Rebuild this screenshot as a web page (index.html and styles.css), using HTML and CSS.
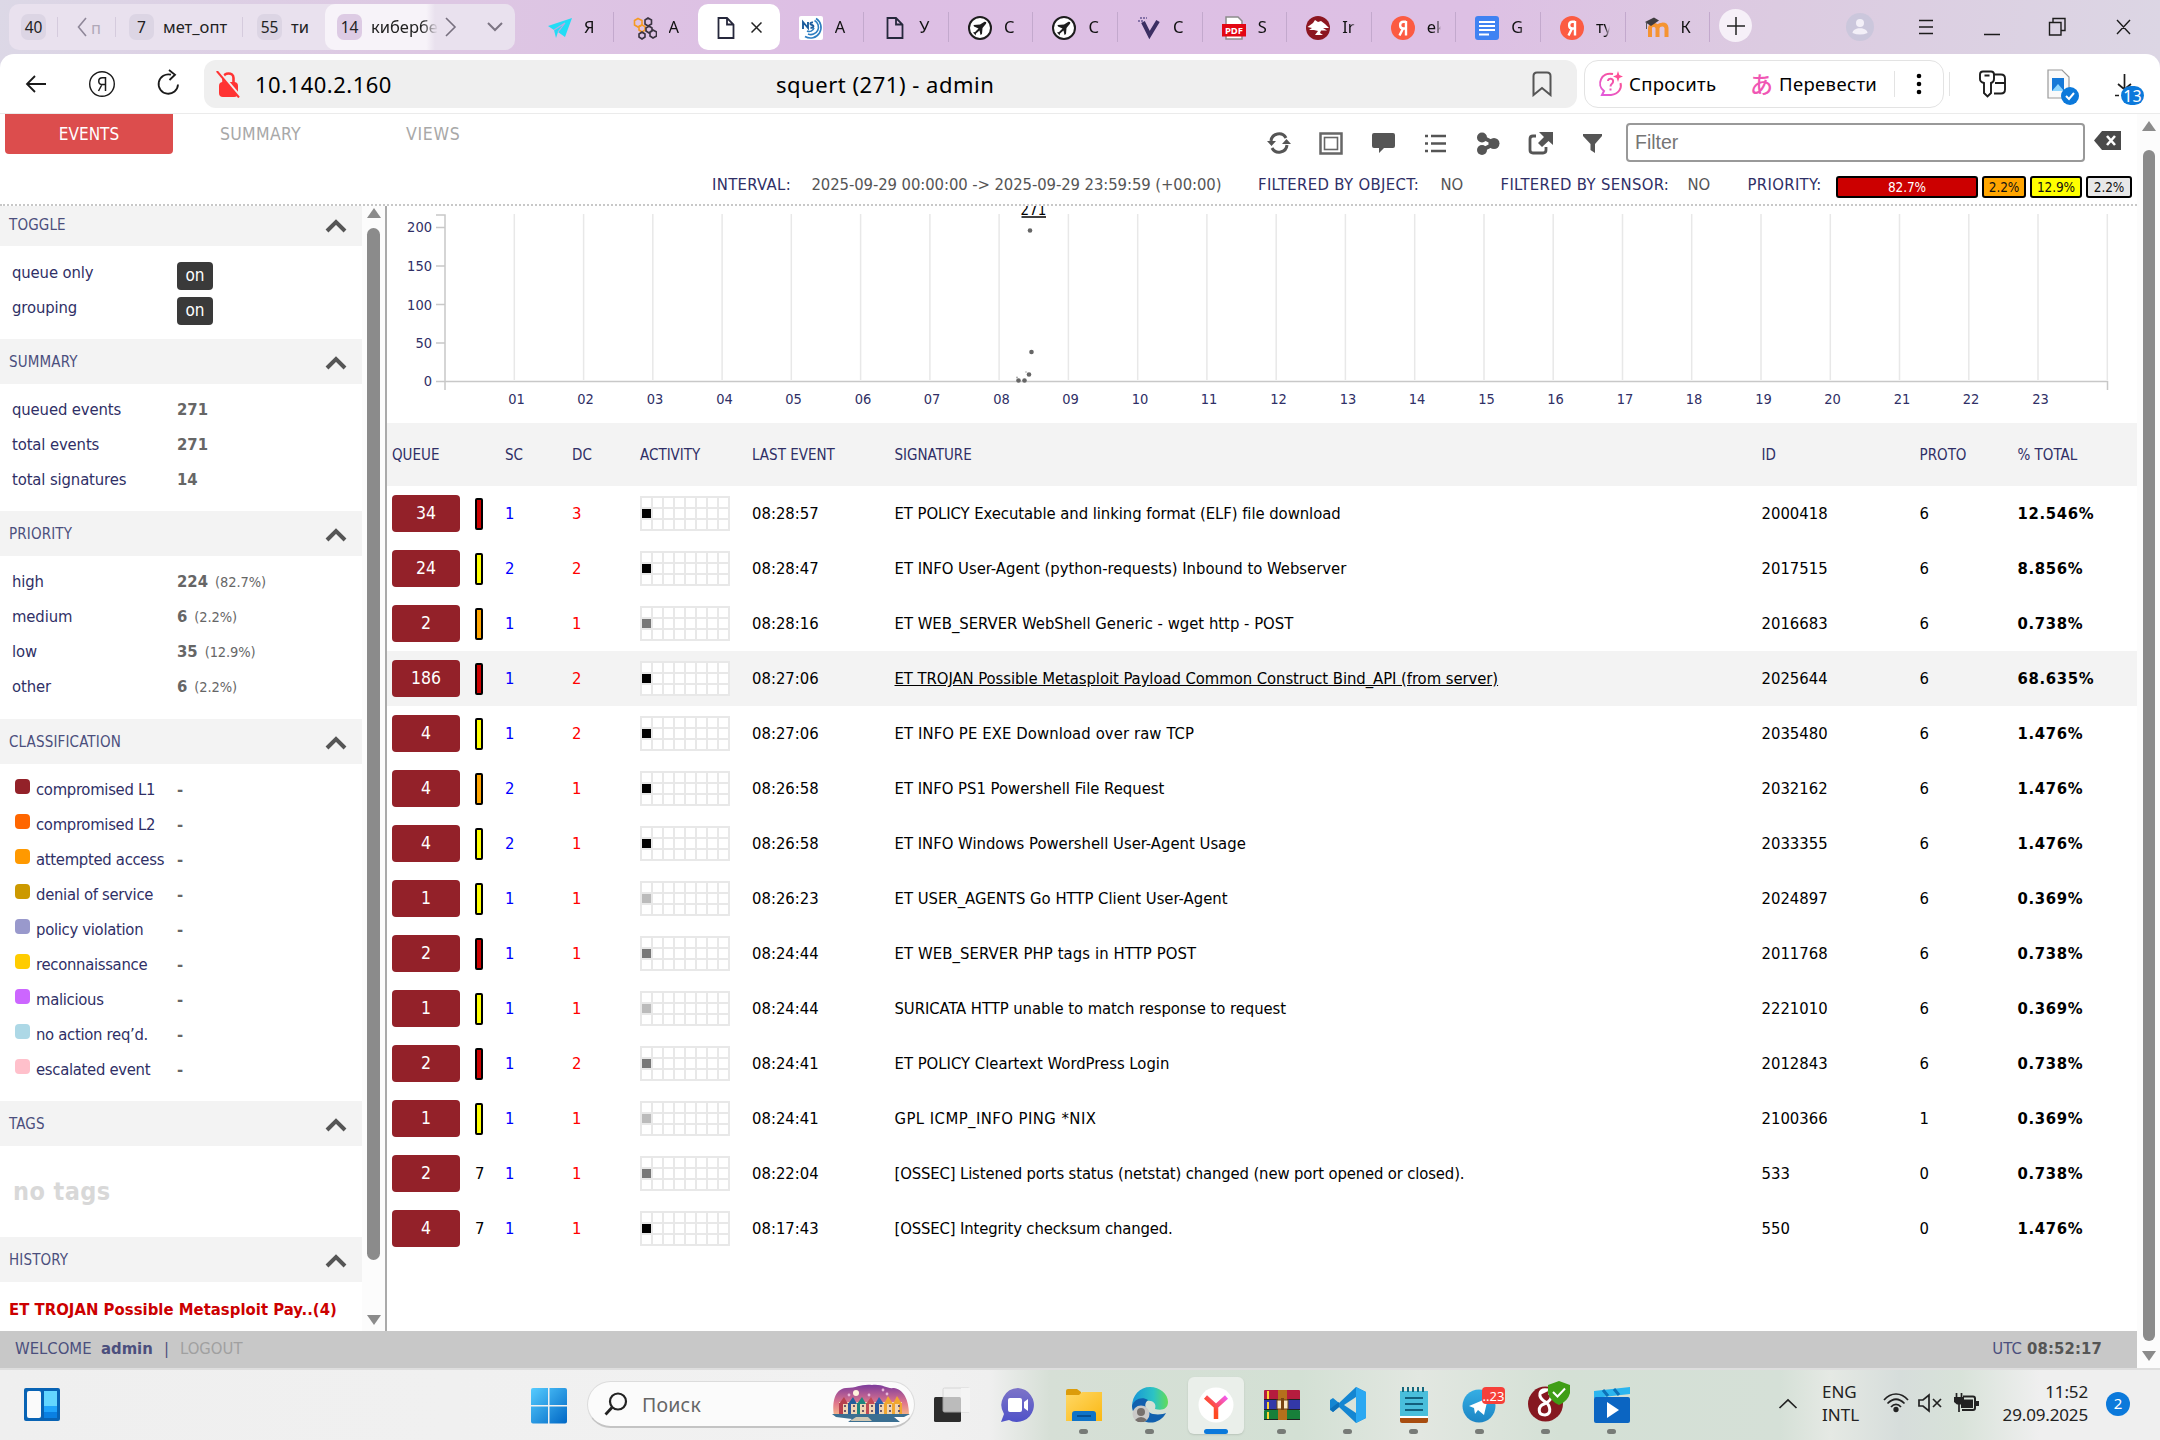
FILE: index.html
```html
<!DOCTYPE html>
<html lang="ru">
<head>
<meta charset="utf-8">
<title>squert (271) - admin</title>
<link rel="stylesheet" href="styles.css">
</head>
<body>
<svg class="defs" width="0" height="0" aria-hidden="true">
  <defs>
    <symbol id="doc" viewBox="0 0 24 24"><path d="M4.500 2H13L19.500 8.500V22H4.500ZM13 2V8.500H19.500" fill="none" stroke="#26283c" stroke-width="1.800"/></symbol>
    <symbol id="plane" viewBox="0 0 24 24"><circle cx="12" cy="12" r="11" fill="#fff" stroke="#1d1d1d" stroke-width="2"/><path d="M5.500 9L12 8.500L16.500 5.800Q19 5.500 18 7.800L14.500 12L14 18L12.500 19L11.500 14.500L8 17.500L7.500 19.500L6.500 18L5 16.500L7 16L10.500 12.500L6 10.500Z" fill="#1d1d1d"/></symbol>
    <symbol id="ya" viewBox="0 0 24 24"><circle cx="12" cy="12" r="12" fill="#fc5b42"/><path d="M15 5V19.500M15 5.800H12.500C8 5.800 8 12.500 12.500 12.500H15M12 12.500L8.500 19.500" fill="none" stroke="#fff" stroke-width="2.400"/></symbol>
    <symbol id="chev" viewBox="0 0 22 14"><path d="M2 12L11 3L20 12" fill="none" stroke="#555" stroke-width="4"/></symbol>
    <linearGradient id="pink" x1="0" y1="1" x2="1" y2="0"><stop offset="0" stop-color="#e05be0"/><stop offset="1" stop-color="#ff4f86"/></linearGradient>
    <linearGradient id="win" x1="0" y1="0" x2="1" y2="1"><stop offset="0" stop-color="#56ccff"/><stop offset="1" stop-color="#0067c5"/></linearGradient>
    <linearGradient id="meet" x1="0" y1="0" x2="0" y2="1"><stop offset="0" stop-color="#7d74c8"/><stop offset="1" stop-color="#4f52c8"/></linearGradient>
    <linearGradient id="fold" x1="0" y1="0" x2="1" y2="1"><stop offset="0" stop-color="#ffd866"/><stop offset="1" stop-color="#fbb813"/></linearGradient>
    <linearGradient id="edge" x1="0" y1="0" x2="1" y2="0"><stop offset="0" stop-color="#1795d8"/><stop offset=".6" stop-color="#2cc3c4"/><stop offset="1" stop-color="#62dc58"/></linearGradient>
    <linearGradient id="yy" x1="0" y1="1" x2="1" y2="0"><stop offset=".4" stop-color="#ff4a22"/><stop offset="1" stop-color="#f25bf2"/></linearGradient>
    <linearGradient id="sky" x1="0" y1="0" x2="0" y2="1"><stop offset="0" stop-color="#7d3c9c"/><stop offset=".6" stop-color="#e0768c"/><stop offset="1" stop-color="#f5b489"/></linearGradient>
    <linearGradient id="tg" x1="0" y1="0" x2="0" y2="1"><stop offset="0" stop-color="#35aee4"/><stop offset="1" stop-color="#1c85c4"/></linearGradient>
  </defs>
</svg>

<div class="tabstrip">
  <div class="groups">
    <span class="badge hex">40</span><i class="gsep s1"></i>
    <svg class="gl" width="10" height="20" viewBox="0 0 10 20"><path d="M9 1L1.500 10L9 19" fill="none" stroke="#8f8799" stroke-width="1.600"/></svg>
    <span class="gfade">п</span><i class="gsep s2"></i>
    <span class="badge">7</span><span class="gname n1">мет_опт</span><i class="gsep s3"></i>
    <span class="badge">55</span><span class="gname n2">ти</span>
    <span class="gactive"><span class="badge dark">14</span><span class="gname n3">кибербе</span></span>
    <svg class="gr" width="12" height="20" viewBox="0 0 12 20"><path d="M1 1L10 10L1 19" fill="none" stroke="#77707f" stroke-width="1.600"/></svg>
    <svg class="gd" width="16" height="10" viewBox="0 0 16 10"><path d="M1 1L8 8L15 1" fill="none" stroke="#7c7583" stroke-width="2"/></svg>
  </div>
  <div class="tabs">
    <div class="tab"><svg width="24" height="24" viewBox="0 0 24 24"><path d="M0 10L24 2L17 21L10 16L8 22L6 14Z" fill="#22dcf5"/><path d="M6 14L17 7L10 16" fill="none" stroke="#b8a9e0" stroke-width="1.200"/></svg><b>Я</b></div>
    <div class="tab nosep"><svg width="24" height="24" viewBox="0 0 24 24" fill="none" stroke-width="1.600"><path d="M5 2.500L9 4.500V9L5 11L1.500 9V4.500Z" stroke="#f59a23"/><path d="M9 9L12 10.500V14L9 16L6 14V10.500Z" stroke="#f59a23"/><path d="M15 2L18.500 4V8L15 10L12 8V4ZM16 10L19 12V15L16 17L13 15V12ZM9 16L12 18V21L9 23L6 21V18ZM20 14L23.500 16V20L20 22L17 20V16Z" stroke="#3a3340"/></svg><b>А</b></div>
    <div class="tab active"><svg width="24" height="24"><use href="#doc"/></svg><svg class="tx" width="11" height="11" viewBox="0 0 11 11"><path d="M.5.5L10.500 10.500M10.500.5L.5 10.500" stroke="#222" stroke-width="1.500"/></svg></div>
    <div class="tab"><svg width="24" height="24" viewBox="0 0 24 24"><rect width="24" height="24" rx="2" fill="#fff"/><path d="M4 13V6L9 12V6M14 6.500C11 6 10.500 8.500 13 9C15.500 9.500 14.500 12.500 11.500 11.500" fill="none" stroke="#1c5c9c" stroke-width="1.900"/><path d="M15.500 4.500A7.500 7.500 0 0 1 9 18M17 2.500A10 10 0 0 1 6 20.500M15 12A5 5 0 0 1 8 15" fill="none" stroke="#2d7ec0" stroke-width="1.600"/></svg><b>А</b></div>
    <div class="tab"><svg width="24" height="24"><use href="#doc"/></svg><b>У</b></div>
    <div class="tab"><svg width="24" height="24"><use href="#plane"/></svg><b>С</b></div>
    <div class="tab"><svg width="24" height="24"><use href="#plane"/></svg><b>С</b></div>
    <div class="tab"><svg width="24" height="24" viewBox="0 0 24 24"><path d="M6 6L12.500 19L21 5" fill="none" stroke="#3c2f63" stroke-width="4"/><path d="M1 5H6M3 2H10" stroke="#6a5a94" stroke-width="1.500" stroke-dasharray="2 1"/></svg><b>С</b></div>
    <div class="tab"><svg width="24" height="24" viewBox="0 0 24 24"><path d="M4 1H16L20 5V23H4Z" fill="#fff" stroke="#8c8c8c" stroke-width="1.500"/><rect y="8" width="24" height="12.500" fill="#e30613"/><text x="12" y="18" text-anchor="middle" class="pdf">PDF</text></svg><b>S</b></div>
    <div class="tab"><svg width="24" height="24" viewBox="0 0 24 24"><circle cx="12" cy="12" r="12" fill="#8c1620"/><path d="M1.500 11L7 7L9 4L12 6L15 5L19 8L23 12L17 12L21 14.500L15 14.500L14 17L17 19H9L12 15L8 14L3 14L6 12Z" fill="#fff"/></svg><b>Ir</b></div>
    <div class="tab"><svg width="24" height="24"><use href="#ya"/></svg><b>ek</b></div>
    <div class="tab"><svg width="24" height="24" viewBox="0 0 24 24"><rect width="24" height="24" rx="3" fill="#3f82f2"/><path d="M4 6H20M4 10H20M4 14H20M4 18.500H14" stroke="#fff" stroke-width="2.200"/></svg><b>G</b></div>
    <div class="tab"><svg width="24" height="24"><use href="#ya"/></svg><b>ту</b></div>
    <div class="tab"><svg width="24" height="24" viewBox="0 0 24 24"><path d="M5 21V12C5 8 12 8 12.500 12V21M12.500 12C13 8 21 7 21.500 12V21" fill="none" stroke="#f59432" stroke-width="4"/><path d="M0 6L9 1.500L14 4.500L6 10Z" fill="#3f3c40"/><path d="M1.500 6V13" stroke="#555"/></svg><b>К</b></div>
  </div>
  <div class="plus"><svg width="18" height="18" viewBox="0 0 18 18"><path d="M9 0V18M0 9H18" stroke="#222" stroke-width="1.500"/></svg></div>
  <svg class="ava" width="28" height="28" viewBox="0 0 28 28"><circle cx="14" cy="14" r="14" fill="#cbc7dc"/><circle cx="14" cy="10" r="4" fill="#f3f0f8"/><path d="M6.500 20C6.500 13.500 21.500 13.500 21.500 20Q14 23 6.500 20Z" fill="#f3f0f8"/></svg>
  <svg class="wc" width="220" height="20" viewBox="0 0 220 20" fill="none" stroke="#1c1c1c" stroke-width="1.400"><path d="M1 4.500H15M1 11H15M1 17.500H15M66 18.500H82M135 6.500V2.500H147V14.500H143M131.500 6.500H143V19H131.500ZM199 4L212 18M212 4L199 18"/></svg>
</div>

<div class="toolbar">
  <svg class="navs" width="160" height="30" viewBox="0 0 160 30" fill="none" stroke="#1a1a1a" stroke-width="1.800"><path d="M10 7L2 15L10 23M2 15H21"/><circle cx="77" cy="15" r="12.300" stroke-width="1.400"/><path d="M80.500 8V22M80.500 8.800H77.500C72.500 8.800 72.500 15.500 77.500 15.500H80.500M77 15.500L73.500 22" stroke-width="1.500"/><path d="M153 15.500A9.700 9.700 0 1 1 146 5.700M144 1L150 5.700L144.500 11"/></svg>
  <div class="address">
    <svg width="25" height="27" viewBox="0 0 25 27"><path d="M7.500 12V7C7.500 1 17.500 1 17.500 7V12" fill="none" stroke="#ff3333" stroke-width="2.600"/><rect x="3" y="11" width="19" height="15" rx="4" fill="#ff3333"/><path d="M2.500 0L24.500 26" stroke="#efefef" stroke-width="3"/><path d="M.8 0L23 26.500" stroke="#ff3333" stroke-width="2"/></svg>
    <span class="ip">10.140.2.160</span><span class="ptitle">squert (271) - admin</span>
    <svg class="bm" width="20" height="26" viewBox="0 0 20 26"><path d="M1.500 24V5Q1.500 1.500 5 1.500H15Q18.500 1.500 18.500 5V24L10 17Z" fill="none" stroke="#555" stroke-width="2"/></svg>
  </div>
  <div class="pill">
    <svg class="ask" width="26" height="26" viewBox="0 0 26 26" fill="none" stroke="url(#pink)" stroke-width="2"><path d="M15 3C3 .5-2 14 6 20L4 24H13C21 23 24 17 22.500 12M10 10C10 6.500 16 7 15 11C14.500 13 12.500 13 12.500 15.500M12.500 17.500V19.500"/><path d="M20 0L21.300 4L25 5.500L21.300 7L20 11L18.700 7L15 5.500L18.700 4Z" fill="#ff4f96" stroke="none"/></svg>
    <span class="pt a">Спросить</span><span class="kana">あ</span><span class="pt b">Перевести</span><i class="psep"></i>
    <svg width="6" height="24" viewBox="0 0 6 24"><circle cx="3" cy="4" r="2.300"/><circle cx="3" cy="12" r="2.300"/><circle cx="3" cy="20" r="2.300"/></svg>
  </div>
  <i class="tsep"></i>
  <svg class="ticons" width="175" height="48" viewBox="0 0 175 48" fill="none" stroke="#1d1d1d" stroke-width="2"><path d="M14 11.500H22Q25 11.500 25 14.500V19Q25 22 22 23V33L18.500 36.500L15 33V23Q11 22 11 19V14.500Q11 11.500 14 11.500ZM15.500 15.500H20.500" stroke-width="1.900"/><path d="M25 14.500H32Q36 14.500 36 18.500V29.500Q36 33.500 32 33.500H25M26 23H36" stroke-width="1.900"/><path d="M79 10H93L100 17V38H79Z" fill="#fafafa" stroke="#9a9a9a" stroke-width="1.200"/><path d="M83 18H95V31H83Z" fill="#1679d8" stroke="none"/><path d="M83 31L89 24L95 31Z" fill="#8ed6ff" stroke="none"/><circle cx="101" cy="36" r="9" fill="#0b79db" stroke="none"/><path d="M97 36L100 39L105 33" stroke="#fff"/><path d="M155.500 14V29M149 24L155 29M146 35.500H150M162 24L157 28" stroke-width="1.700"/><rect x="152" y="26" width="23" height="19" rx="9.500" fill="#0b79db" stroke="none"/><text x="163.500" y="41.500" text-anchor="middle" class="b13">13</text></svg>
</div>

<div class="page">
  <div class="app">
    <div class="head">
      <nav><a class="on"><span class="x1">EVENTS</span></a><a class="t2">SUMMARY</a><a class="t3">VIEWS</a></nav>
      <div class="tools">
        <svg class="ti" width="340" height="30" viewBox="0 0 340 30"><g fill="none" stroke="#555" stroke-width="3"><path d="M4 13A8 8 0 0 1 19 10M20 17A8 8 0 0 1 5 20"/></g><path d="M0 13H9L4.500 18ZM15 16H24L19.500 11Z" fill="#555"/><g fill="none" stroke="#666"><rect x="53.500" y="5.500" width="21" height="20" stroke-width="2.500"/><rect x="57.500" y="9.500" width="13" height="12" stroke-width="1.600"/></g><path d="M107 5H126Q128 5 128 7V18Q128 20 126 20H117L112 25V20H107Q105 20 105 18V7Q105 5 107 5Z" fill="#555"/><path d="M164 8H179M164 15.500H179M164 23H179" stroke="#555" stroke-width="2.600"/><path d="M158 8H161M158 15.500H161M158 23H161" stroke="#555" stroke-width="2.600"/><path d="M215 9L228 15.500L215 22" stroke="#555" stroke-width="4" fill="none"/><g fill="#555"><circle cx="215" cy="9.500" r="5"/><circle cx="215" cy="22" r="5"/><circle cx="227" cy="15.500" r="5.500"/></g><path d="M269 8H266Q263 8 263 11V22Q263 25 266 25H276Q279 25 279 22V19" fill="none" stroke="#555" stroke-width="2.800"/><path d="M272 4H286V17L281.500 13L275 19L271 15L277 9Z" fill="#555"/><path d="M316 6H335V8L328 16V25L323.500 22V16L316 8Z" fill="#555"/></svg>
        <div class="filter">Filter</div>
        <svg width="28" height="20" viewBox="0 0 28 20"><path d="M8 0H27V19H8L0 9.500Z" fill="#4a4a4a"/><path d="M13 5L21 14M21 5L13 14" stroke="#fff" stroke-width="2.600"/></svg>
      </div>
      <div class="status"><span class="l i">INTERVAL:</span><span class="v d">2025-09-29 00:00:00 -&gt; 2025-09-29 23:59:59 (+00:00)</span><span class="l o">FILTERED BY OBJECT:</span><span class="v n">NO</span><span class="l s">FILTERED BY SENSOR:</span><span class="v n">NO</span><span class="l p">PRIORITY:</span>
        <span class="bars"><i class="red">82.7%</i><i class="org">2.2%</i><i class="yel">12.9%</i><i class="gry">2.2%</i></span></div>
    </div>
    <div class="body">
      <aside>
        <h3 class="first">TOGGLE<svg width="22" height="14"><use href="#chev"/></svg></h3>
        <div class="sec tog"><p><span>queue only</span><em>on</em></p><p><span>grouping</span><em>on</em></p></div>
        <h3>SUMMARY<svg width="22" height="14"><use href="#chev"/></svg></h3>
        <div class="sec sum"><p><span>queued events</span><b>271</b></p><p><span>total events</span><b>271</b></p><p><span>total signatures</span><b>14</b></p></div>
        <h3>PRIORITY<svg width="22" height="14"><use href="#chev"/></svg></h3>
        <div class="sec pri"><p><span>high</span><b>224</b><small>(82.7%)</small></p><p><span>medium</span><b>6</b><small>(2.2%)</small></p><p><span>low</span><b>35</b><small>(12.9%)</small></p><p><span>other</span><b>6</b><small>(2.2%)</small></p></div>
        <h3>CLASSIFICATION<svg width="22" height="14"><use href="#chev"/></svg></h3>
        <div class="sec cls">
          <p><i class="c1"></i><span>compromised L1</span><b>-</b></p><p><i class="c2"></i><span>compromised L2</span><b>-</b></p><p><i class="c3"></i><span>attempted access</span><b>-</b></p><p><i class="c4"></i><span>denial of service</span><b>-</b></p><p><i class="c5"></i><span>policy violation</span><b>-</b></p><p><i class="c6"></i><span>reconnaissance</span><b>-</b></p><p><i class="c7"></i><span>malicious</span><b>-</b></p><p><i class="c8"></i><span>no action req’d.</span><b>-</b></p><p><i class="c9"></i><span>escalated event</span><b>-</b></p>
        </div>
        <h3>TAGS<svg width="22" height="14"><use href="#chev"/></svg></h3>
        <div class="notags">no tags</div>
        <h3>HISTORY<svg width="22" height="14"><use href="#chev"/></svg></h3>
        <div class="hist">ET TROJAN Possible Metasploit Pay..(4)</div>
      </aside>
      <div class="sbar side"><i class="up"></i><i class="thumb"></i><i class="down"></i></div>
      <main>
        <svg class="chart" width="1750" height="217" viewBox="387 206 1750 217">
          <path d="M514.300 214V380M583.600 214V380M652.800 214V380M722.100 214V380M791.300 214V380M860.600 214V380M929.900 214V380M999.100 214V380M1068.400 214V380M1137.700 214V380M1206.900 214V380M1276.200 214V380M1345.400 214V380M1414.700 214V380M1484 214V380M1553.200 214V380M1622.500 214V380M1691.700 214V380M1761 214V380M1830.300 214V380M1899.500 214V380M1968.800 214V380M2038 214V380M2107.300 214V380" stroke="#e8e8e8" stroke-width="1.500"/>
          <path d="M436 215H445V390M436 227.500H445M436 266H445M436 304.500H445M436 343H445M436 381.500H2107.500V390" fill="none" stroke="#c8c8c8" stroke-width="1.500"/>
          <g class="ax" text-anchor="end"><text x="432" y="232">200</text><text x="432" y="271">150</text><text x="432" y="309.500">100</text><text x="432" y="348">50</text><text x="432" y="386">0</text></g>
          <g class="ax" text-anchor="middle"><text x="516.500" y="404">01</text><text x="585.500" y="404">02</text><text x="655" y="404">03</text><text x="724.500" y="404">04</text><text x="793.500" y="404">05</text><text x="863" y="404">06</text><text x="932" y="404">07</text><text x="1001.500" y="404">08</text><text x="1070.500" y="404">09</text><text x="1140" y="404">10</text><text x="1209" y="404">11</text><text x="1278.500" y="404">12</text><text x="1348" y="404">13</text><text x="1417" y="404">14</text><text x="1486.500" y="404">15</text><text x="1555.500" y="404">16</text><text x="1625" y="404">17</text><text x="1694" y="404">18</text><text x="1763.500" y="404">19</text><text x="1832.500" y="404">20</text><text x="1902" y="404">21</text><text x="1971" y="404">22</text><text x="2040.500" y="404">23</text></g>
          <text class="pk" x="1033.500" y="215" text-anchor="middle">271</text><path d="M1021.500 217H1046" stroke="#000" stroke-width="1.500"/>
          <g fill="#666"><circle cx="1030" cy="230.500" r="2.300"/><circle cx="1031.500" cy="352" r="2.300"/><circle cx="1029" cy="374.500" r="2.300"/><circle cx="1018.500" cy="380.500" r="2.300"/><circle cx="1024.500" cy="380.500" r="2.300"/><circle cx="1017" cy="377.500" r="1" fill="#aaa"/><circle cx="1026" cy="372" r="1" fill="#ccc"/></g>
        </svg>
        <div class="row th"><span>QUEUE</span><span></span><span>SC</span><span>DC</span><span>ACTIVITY</span><span>LAST EVENT</span><span>SIGNATURE</span><span>ID</span><span>PROTO</span><span>% TOTAL</span></div>
        <div class="row"><b class="q">34</b><i class="pr red"></i><span class="sc">1</span><span class="dc">3</span><span class="act"><i class="k4"></i></span><span>08:28:57</span><span class="sg snug">ET POLICY Executable and linking format (ELF) file download</span><span>2000418</span><span>6</span><b class="pc">12.546%</b></div>
        <div class="row"><b class="q">24</b><i class="pr yel"></i><span class="sc">2</span><span class="dc">2</span><span class="act"><i class="k4"></i></span><span>08:28:47</span><span class="sg">ET INFO User-Agent (python-requests) Inbound to Webserver</span><span>2017515</span><span>6</span><b class="pc">8.856%</b></div>
        <div class="row"><b class="q">2</b><i class="pr org"></i><span class="sc">1</span><span class="dc">1</span><span class="act"><i class="k2"></i></span><span>08:28:16</span><span class="sg">ET WEB_SERVER WebShell Generic - wget http - POST</span><span>2016683</span><span>6</span><b class="pc">0.738%</b></div>
        <div class="row hl"><b class="q">186</b><i class="pr red"></i><span class="sc">1</span><span class="dc">2</span><span class="act"><i class="k4"></i></span><span>08:27:06</span><span class="sg snug">ET TROJAN Possible Metasploit Payload Common Construct Bind_API (from server)</span><span>2025644</span><span>6</span><b class="pc">68.635%</b></div>
        <div class="row"><b class="q">4</b><i class="pr yel"></i><span class="sc">1</span><span class="dc">2</span><span class="act"><i class="k4"></i></span><span>08:27:06</span><span class="sg loose">ET INFO PE EXE Download over raw TCP</span><span>2035480</span><span>6</span><b class="pc">1.476%</b></div>
        <div class="row"><b class="q">4</b><i class="pr org"></i><span class="sc">2</span><span class="dc">1</span><span class="act"><i class="k4"></i></span><span>08:26:58</span><span class="sg">ET INFO PS1 Powershell File Request</span><span>2032162</span><span>6</span><b class="pc">1.476%</b></div>
        <div class="row"><b class="q">4</b><i class="pr yel"></i><span class="sc">2</span><span class="dc">1</span><span class="act"><i class="k4"></i></span><span>08:26:58</span><span class="sg">ET INFO Windows Powershell User-Agent Usage</span><span>2033355</span><span>6</span><b class="pc">1.476%</b></div>
        <div class="row"><b class="q">1</b><i class="pr yel"></i><span class="sc">1</span><span class="dc">1</span><span class="act"><i class="k1"></i></span><span>08:26:23</span><span class="sg">ET USER_AGENTS Go HTTP Client User-Agent</span><span>2024897</span><span>6</span><b class="pc">0.369%</b></div>
        <div class="row"><b class="q">2</b><i class="pr red"></i><span class="sc">1</span><span class="dc">1</span><span class="act"><i class="k2"></i></span><span>08:24:44</span><span class="sg loose">ET WEB_SERVER PHP tags in HTTP POST</span><span>2011768</span><span>6</span><b class="pc">0.738%</b></div>
        <div class="row"><b class="q">1</b><i class="pr yel"></i><span class="sc">1</span><span class="dc">1</span><span class="act"><i class="k1"></i></span><span>08:24:44</span><span class="sg snug">SURICATA HTTP unable to match response to request</span><span>2221010</span><span>6</span><b class="pc">0.369%</b></div>
        <div class="row"><b class="q">2</b><i class="pr red"></i><span class="sc">1</span><span class="dc">2</span><span class="act"><i class="k2"></i></span><span>08:24:41</span><span class="sg">ET POLICY Cleartext WordPress Login</span><span>2012843</span><span>6</span><b class="pc">0.738%</b></div>
        <div class="row"><b class="q">1</b><i class="pr yel"></i><span class="sc">1</span><span class="dc">1</span><span class="act"><i class="k1"></i></span><span>08:24:41</span><span class="sg wide">GPL ICMP_INFO PING *NIX</span><span>2100366</span><span>1</span><b class="pc">0.369%</b></div>
        <div class="row"><b class="q">2</b><span>7</span><span class="sc">1</span><span class="dc">1</span><span class="act"><i class="k2"></i></span><span>08:22:04</span><span class="sg tight">[OSSEC] Listened ports status (netstat) changed (new port opened or closed).</span><span>533</span><span>0</span><b class="pc">0.738%</b></div>
        <div class="row"><b class="q">4</b><span>7</span><span class="sc">1</span><span class="dc">1</span><span class="act"><i class="k4"></i></span><span>08:17:43</span><span class="sg tight">[OSSEC] Integrity checksum changed.</span><span>550</span><span>0</span><b class="pc">1.476%</b></div>
      </main>
    </div>
    <footer><span class="w">WELCOME</span><b class="ad">admin</b><span class="br">|</span><span class="lo">LOGOUT</span><span class="utc">UTC <b>08:52:17</b></span></footer>
  </div>
  <div class="sbar outer"><i class="up"></i><i class="thumb"></i><i class="down"></i></div>
</div>

<div class="taskbar">
  <svg class="widg" width="36" height="34" viewBox="0 0 36 34"><rect width="36" height="33" rx="2" fill="#0863b4"/><rect x="3" y="3" width="14" height="27" rx="2" fill="#fafafa"/><rect x="20" y="3" width="13" height="15" fill="#63d6ff"/><rect x="20" y="18" width="13" height="6" fill="#1fa4fb"/><rect x="20" y="24" width="13" height="6" fill="#0a80e2"/></svg>
  <svg class="start" width="36" height="36" viewBox="0 0 36 36"><path d="M0 2Q0 0 2 0H17V17H0ZM18.500 0H34Q36 0 36 2V17H18.500ZM0 18.500H17V35.500H2Q0 35.500 0 33.500ZM18.500 18.500H36V33.500Q36 35.500 34 35.500H18.500Z" fill="url(#win)"/></svg>
  <div class="search"><svg width="24" height="24" viewBox="0 0 24 24"><circle cx="14" cy="9.500" r="8" fill="none" stroke="#222" stroke-width="2.200"/><path d="M8 15.500L1.500 22.500" stroke="#222" stroke-width="2.800"/></svg><span>Поиск</span>
    <svg class="pic" width="78" height="40" viewBox="0 0 78 40"><path d="M2 31C0 20 2 5 14 4C26 4 28 0 40 1C52 0 54 5 62 4C74 6 77 20 77 31Z" fill="url(#sky)"/><circle cx="24" cy="9" r="3" fill="#fff3dc"/><g fill="#e7b6d8"><circle cx="17" cy="11" r="1.400"/><circle cx="37" cy="11" r="1.400"/><circle cx="51" cy="6" r="1.400"/><circle cx="55" cy="10" r="1.400"/></g><path d="M7 18H70V30H7Z" fill="#f0d5b4"/><path d="M7 20L12 13L16 20Z" fill="#b8404e"/><path d="M16 20L21 13L25 20Z" fill="#225f9a"/><path d="M25 20L30 13L34 20Z" fill="#1d857e"/><path d="M34 20L39 13L43 20Z" fill="#c24a55"/><path d="M43 20L47 13L52 20Z" fill="#2c62b0"/><path d="M52 20L56 12L61 20ZM61 20L65 12L70 20Z" fill="#f0a631"/><path d="M7 19H11V30H7Z" fill="#b8404e"/><path d="M16 19H19V30H16ZM43 19H47V30H43Z" fill="#2a5a9c"/><path d="M25 19H28V30H25Z" fill="#1d857e"/><path d="M34 19H37V30H34Z" fill="#c24a55"/><path d="M52 19H55V30H52ZM60 19H63V30H60ZM67 19H70V30H67Z" fill="#f0a631"/><path d="M12 22H70M12 27H70" stroke="#6a5668" stroke-width="2" stroke-dasharray="2 7"/><path d="M0 30H78L72 33H62L68 38H16L20 35L4 33Z" fill="#3b6f92"/><path d="M18 37L24 33H36L40 37Z" fill="#cfc7b4"/></svg></div>
  <div class="apps">
    <div><svg width="36" height="36" viewBox="0 0 36 36"><rect y="10" width="27" height="25" rx="1.500" fill="#2c2c2c"/><rect x="9" y="1" width="27" height="24" rx="1.500" fill="#f2f2f2" opacity=".72" stroke="#ccc"/><rect x="27" y="1" width="9" height="24" fill="#f4f4f4"/></svg></div>
    <div><svg width="36" height="36" viewBox="0 0 36 36"><path d="M18 1A17 17 0 1 1 9 33L1 35L4 27A17 17 0 0 1 18 1Z" fill="url(#meet)"/><rect x="8" y="11" width="14" height="14" rx="2" fill="#fff"/><path d="M24 15L28 12V24L24 21Z" fill="#fff"/></svg></div>
    <div class="run"><svg width="36" height="36" viewBox="0 0 36 36"><path d="M0 4Q0 2 2 2H11L15 5V10H0Z" fill="#dc9c0a"/><path d="M0 8H13L16 5H36V34H0Z" fill="url(#fold)"/><path d="M6 34V27Q6 24 9 24H27Q30 24 30 27V34Z" fill="#0f73c8"/><path d="M11 29H25" stroke="#064f92" stroke-width="2"/></svg></div>
    <div class="run"><svg width="36" height="36" viewBox="0 0 36 36"><path d="M0 20C0 8 8 0 18 0C28 0 36 7 36 15C36 22 30 24 23 22C25 16 20 13 15 14C10 15 8 20 9 25Z" fill="url(#edge)"/><path d="M0 19C2 12 10 9 16 13C11 17 13 25 21 27C27 28 32 27 34 26C30 34 20 38 12 34C5 31 0 26 0 19Z" fill="#1160ae"/><circle cx="9" cy="27" r="8.500" fill="#cbcac8"/><circle cx="9" cy="25" r="4" fill="#77716d"/><path d="M3 33Q9 27 15 33L12 35H6Z" fill="#77716d"/></svg></div>
    <div class="run cur"><svg width="36" height="36" viewBox="0 0 36 36"><circle cx="18" cy="18" r="17.500" fill="#fff"/><path d="M7.500 10L18 19.500L28.500 10M18 19V32" fill="none" stroke="url(#yy)" stroke-width="4.500"/></svg></div>
    <div class="run"><svg width="36" height="36" viewBox="0 0 36 36"><rect y="3" width="36" height="10" rx="1" fill="#b51c3e"/><rect y="13" width="36" height="10" fill="#3338a8"/><rect y="23" width="36" height="10" rx="1" fill="#17803a"/><path d="M0 12.500H36M0 22.500H36M0 32.500H36" stroke="#222"/><path d="M4 4V12M4 15V22M4 25V32" stroke="#ffd52f" stroke-width="2"/><path d="M14 3H23V33H14Z" fill="#b5701c"/><rect x="13" y="13" width="11" height="9" fill="#fbe9c5" stroke="#6d4512"/><rect x="17" y="11" width="3" height="12" fill="#7a4412"/></svg></div>
    <div class="run"><svg width="36" height="36" viewBox="0 0 36 36"><path d="M26 0L36 5V31L26 36L9 20L3 25L0 23V13L3 11L9 16ZM26 10L14 18L26 26Z" fill="#1486d2"/><path d="M3 25L0 22L9 15V20Z" fill="#0d6fb8"/><path d="M26 0L36 5V31L26 36Z" fill="#2ba8f2"/></svg></div>
    <div class="run"><svg width="36" height="36" viewBox="0 0 36 36"><rect x="4" y="4" width="28" height="30" fill="#49bedb"/><path d="M4 31H32V34Q32 36 30 36H6Q4 36 4 34Z" fill="#a84d10"/><path d="M7 0V5M12 0V5M17 0V5M22 0V5M27 0V5" stroke="#16687e" stroke-width="2"/><path d="M9 11H27M9 17H27M9 23H27" stroke="#125f7d" stroke-width="2"/><path d="M4 30H32" stroke="#fff" stroke-width="2"/></svg></div>
    <div class="run"><svg width="44" height="36" viewBox="0 0 44 36"><circle cx="17" cy="19" r="16.500" fill="url(#tg)"/><path d="M7 19L26 11L22 28L16 23L13 27L12 21Z" fill="#fff"/><rect x="20" y="0" width="23" height="17" rx="4" fill="#f6403a"/><text x="31.500" y="13.500" text-anchor="middle" class="tgb">..23</text></svg></div>
    <div class="run"><svg width="44" height="42" viewBox="0 0 44 42"><circle cx="17.500" cy="23" r="17.500" fill="#861820"/><path d="M20 9C10 7 10 16 16 20C23 24 24 33 17 34C9 34 10 25 16 23C24 20 26 12 20 12M13 12L19 9" fill="none" stroke="#fff" stroke-width="3"/><path d="M31 0L42 4V12Q40 20 31 24Q22 20 20 12V4Z" fill="#3f9e16"/><path d="M25 11L29.500 15.500L37 7.500" fill="none" stroke="#fff" stroke-width="2"/></svg></div>
    <div class="run"><svg width="36" height="36" viewBox="0 0 36 36"><path d="M0 4L36 0V7L0 11Z" fill="#2bb5ef"/><path d="M9 3L14 9M20 2L25 8" stroke="#0d72b8" stroke-width="3"/><rect y="10" width="36" height="26" rx="2" fill="#0b65c2"/><path d="M13 15V31L25 23Z" fill="#fff"/></svg></div>
  </div>
  <svg class="tchev" width="20" height="11" viewBox="0 0 20 11"><path d="M1.500 10L10 2L18.500 10" fill="none" stroke="#222" stroke-width="1.700"/></svg>
  <div class="lang"><span>ENG</span><span>INTL</span></div>
  <svg class="sys" width="100" height="26" viewBox="0 0 100 26" fill="none" stroke="#222" stroke-width="1.700"><path d="M1 10C8 2 18 2 25 10M4.500 13.500C10 8 16 8 21.500 13.500M8 17C11 13.500 15 13.500 18 17"/><circle cx="13" cy="19.500" r="1.800" fill="#222"/><path d="M36 10H40L46 5V21L40 16H36ZM50 9L58 17M58 9L50 17"/><path d="M80 6.500H90Q92 6.500 92 8.500V18Q92 20 90 20H79" stroke-width="2"/><path d="M81 9.500H90V18H78V14ZM93 11H96V16H93Z" fill="#222" stroke="none"/><path d="M71 7H81V12L78 14.500H74L71 12Z" fill="#222" stroke="none"/><path d="M73.500 3V8M78.500 3V8M76 14V22"/></svg>
  <div class="clock"><span class="tm">11:52</span><span class="dt">29.09.2025</span></div>
  <div class="notif">2</div>
</div>
</body>
</html>
```
FILE: styles.css
```css
* { box-sizing: border-box; }
body { margin: 0; width: 2160px; height: 1440px; overflow: hidden; background: #fff; font-family: "DejaVu Sans Condensed", "DejaVu Sans", sans-serif; font-stretch: condensed; color: #000; }
span, b, a { white-space: nowrap; }
i, em { font-style: normal; }
svg { flex: none; display: block; }
.defs { position: absolute; }

/* browser tab strip */
.tabstrip { height: 70px; margin-bottom: -16px; padding: 4px 0 0 9px; display: flex; align-items: flex-start; background: linear-gradient(100deg, #dcd8e6 0, #ddc8e3 400px, #ddbfe4 800px, #ddc0e4 1450px, #dccbe1 1750px, #dcd6e4 100%); font-family: "Noto Sans", sans-serif; font-size: 16.5px; color: #222; }
.groups { width: 506px; height: 46px; border-radius: 10px; background: #e9e1ee; display: flex; align-items: center; padding-left: 12px; }
.badge { flex: none; width: 25px; height: 26px; border-radius: 7px; background: #dcd5e4; text-align: center; line-height: 26px; font-size: 15.5px; }
.badge.dark { background: #ddcbe4; }
.gsep { width: 1px; height: 20px; background: #d5cbdd; }
.s1 { margin: 0 19px 0 11px; } .s2 { margin: 0 13px 0 14px; } .s3 { margin: 0 14px 0 12px; }
.gfade { width: 10px; margin-left: 4px; color: #b0a8b8; }
.gname { margin: -2px 0 0 9px; } .n1 { width: 67px; } .n2 { width: 19px; }
.gactive { margin-left: 15px; width: 110px; height: 46px; border-radius: 10px 0 0 10px; background: linear-gradient(90deg, #f7f3f9 92%, #e9e1ee); display: flex; align-items: center; padding-left: 12px; }
.n3 { width: 74px; -webkit-mask-image: linear-gradient(90deg, #000 75%, transparent); }
.gr { margin-left: 10px; } .gd { margin-left: 30px; }
.tabs { display: flex; margin-left: 14px; width: 1181px; height: 46px; }
.tab { flex: 1; display: flex; align-items: center; padding-left: 19px; position: relative; }
.tab > svg { margin-top: 2px; }
.tab b { font-weight: 400; margin: -2px 0 0 12px; width: 14px; overflow: hidden; color: #111; -webkit-mask-image: linear-gradient(90deg, #000 65%, transparent); }
.tab::after { content: ""; position: absolute; right: 0; top: 8px; height: 30px; width: 1px; background: #c3a9cd; }
.tab.nosep::after, .tab.active::after { display: none; }
.tab.active { background: #fff; border-radius: 10px; padding-left: 16px; }
.tab.active .tx { margin: 0 0 0 13px; }
.plus { width: 33px; height: 33px; margin: 5px 0 0 9px; border-radius: 50%; background: #f6f0f8; display: flex; align-items: center; justify-content: center; }
.ava { margin: 9px 0 0 94px; }
.wc { margin: 12px 0 0 44px; }
.pdf { font: 700 9.5px "Noto Sans", sans-serif; fill: #fff; }

/* address toolbar */
.toolbar { position: relative; height: 60px; border-bottom: 1px solid #ebebeb; background: #fff; border-radius: 14px 14px 0 0; display: flex; align-items: flex-start; font-family: "Noto Sans", sans-serif; }
.navs { margin: 15px 0 0 25px; }
.address { margin: 6px 0 0 19px; width: 1373px; height: 48px; border-radius: 12px; background: #efefef; display: flex; align-items: center; padding-left: 12px; font-size: 22px; }
.address span { margin-top: -1px; }
.ip { margin-left: 14px; width: 521px; letter-spacing: .5px; }
.ptitle { width: 756px; letter-spacing: .52px; }
.pill { margin: 6px 0 0 7px; width: 360px; height: 48px; border: 1px solid #e3e3e3; border-radius: 14px; display: flex; align-items: center; padding-left: 13px; font-size: 18.5px; }
.pt { margin-top: -2px; }
.pt.a { margin-left: 5px; width: 121px; letter-spacing: .35px; } .pt.b { margin-left: 5px; width: 115px; letter-spacing: .35px; }
.kana { width: 24px; font: 500 23px/30px "Noto Sans CJK JP", sans-serif; color: #f056b4; margin-top: -2px; }
.psep { width: 1px; height: 26px; background: #e3e3e3; margin-right: 21px; }
.tsep { width: 1px; height: 24px; margin: 18px 0 0 5px; background: #e3e3e3; }
.ticons { margin: 6px 0 0 19px; }
.b13 { font: 16px "Noto Sans", sans-serif; fill: #fff; stroke: none; }

/* squert */
.page { display: flex; height: 1254px; }
.app { width: 2137px; display: flex; flex-direction: column; }
.head { flex: none; height: 92px; border-bottom: 2px dotted #c8c8c8; display: grid; grid-template-columns: 700px 1fr; grid-template-rows: 56px 1fr; }
nav { display: flex; padding-left: 5px; font-size: 17.5px; color: #a8a8a8; line-height: 41px; }
nav .on { width: 168px; height: 40px; background: #dc4d4d; color: #fff; text-align: center; border-radius: 0 0 4px 4px; font-size: 17px; }
.t2 { margin-left: 47px; width: 186px; letter-spacing: .3px; }
.t3 { letter-spacing: .7px; }
.tools { display: flex; align-items: center; padding-left: 567px; }
.ti { margin-top: 2px; }
.filter { margin: 0 9px 0 19px; width: 459px; height: 39px; border: 2px solid #999; border-radius: 4px; padding-left: 7px; font: 19.5px/35px "Liberation Sans", sans-serif; color: #757575; }
.tools > svg:last-child { margin: -3px 0 0 0; }
.status { grid-column: 1 / 3; display: flex; padding-left: 712px; font-size: 16.5px; line-height: 30px; color: #2f2f66; }
.status .l { letter-spacing: .35px; }
.status .v { color: #555; }
.status span { flex: none; }
.i { width: 99.500px; } .d { width: 446.500px; letter-spacing: -.08px; } .o { width: 182.500px; } .n { width: 60px; } .s { width: 187px; } .status .p { width: 88.500px; }
.bars { display: flex; gap: 4px; padding-top: 6px; }
.bars i { height: 22px; border: 2px solid #000; border-radius: 3px; text-align: center; font-size: 13.5px; line-height: 19px; color: #111; letter-spacing: -.1px; }
.bars i:nth-child(1) { width: 142px; color: #fff; } .bars i:nth-child(2) { width: 44px; } .bars i:nth-child(3) { width: 52px; } .bars i:nth-child(4) { width: 46px; }
.red { background: #c00; } .org { background: #ffa500; } .yel { background: #ff0; } .gry { background: #e8e8e8; }

.body { flex: none; display: flex; height: 1125px; }
aside { width: 362px; height: 1125px; overflow: hidden; color: #2f2f66; }
h3 { margin: 0; height: 45px; background: #f3f3f3; display: flex; justify-content: space-between; align-items: center; padding: 0 15px 0 9px; font-size: 15px; font-weight: 400; color: #4b4f7d; letter-spacing: .15px; }
h3 svg { margin-top: 3px; }
h3.first { height: 40px; padding-bottom: 3px; }
.sec { font-size: 16.500px; }
.sec p { margin: 0; height: 35px; display: flex; align-items: center; padding-left: 12px; }
.sec p span { width: 165px; letter-spacing: -.12px; }
.sec b { color: #666; }
.sec small { margin-left: 7px; font-size: 14.500px; color: #666; letter-spacing: -.1px; }
.tog { height: 93px; padding-top: 9px; }
.tog em { width: 36px; height: 28px; margin-top: 6px; border-radius: 4px; background: #3a3a3a; color: #fff; text-align: center; line-height: 27px; font-size: 17px; }
.sum { height: 127px; padding-top: 8px; }
.pri { height: 163px; padding-top: 8px; }
.cls { height: 337px; padding-top: 8px; }
.cls p span { width: 141px; letter-spacing: -.3px; }
.cls i { width: 15px; height: 15px; border-radius: 4px; margin: -6px 6px 0 3px; }
.c1 { background: #932129; } .c2 { background: #f60; } .c3 { background: #f90; } .c4 { background: #c90; } .c5 { background: #99c; } .c6 { background: #fc0; } .c7 { background: #c6f; } .c8 { background: #add8e6; } .c9 { background: #ffc0cb; }
.notags { height: 91px; padding-left: 13px; font-weight: 700; font-size: 25px; line-height: 92px; color: #d8d8d8; letter-spacing: .4px; }
.hist { padding-left: 9px; font-weight: 700; font-size: 16.5px; line-height: 56px; color: #c00; white-space: nowrap; letter-spacing: .04px; }
.sbar { background: #fcfcfc; display: flex; flex-direction: column; align-items: center; }
.sbar i { display: block; }
.side { width: 25px; border-right: 2px solid #aaa; padding-top: 2px; }
.up { border: 7px solid transparent; border-top: 0; border-bottom: 10px solid #8b8b8b; }
.down { border: 7px solid transparent; border-bottom: 0; border-top: 10px solid #8b8b8b; }
.side .thumb { width: 13px; height: 1032px; margin: 10px 0 55px; border-radius: 7px; background: #8b8b8b; }
.outer { width: 23px; padding-top: 7px; }
.outer .thumb { width: 12px; height: 1191px; margin: 19px 0 10px; border-radius: 6px; background: #8b8b8b; }
main { width: 1750px; }
.ax text { font-size: 14.5px; fill: #2f2f66; }
.pk { font-size: 15px; }
.row { height: 55px; display: grid; grid-template-columns: 83px 30px 67px 68px 112px 142.500px 867px 158px 98px 1fr; align-items: center; padding-left: 5px; font-size: 16.5px; }
.th { height: 63px; background: #f3f3f3; font-size: 15px; color: #2f2f66; }
.hl { background: #f3f3f3; }
.hl .sg { justify-self: start; text-decoration: underline; }
.snug { letter-spacing: -.055px; }
.tight { letter-spacing: -.135px; }
.loose { letter-spacing: .1px; }
.wide { letter-spacing: .45px; }
.pc { letter-spacing: .65px; }
.q { width: 68px; height: 37px; border-radius: 4px; background: #932129; color: #fff; text-align: center; font-weight: 400; font-size: 17.500px; line-height: 37px; }
.pr { width: 8px; height: 32px; border: 2px solid #000; border-radius: 2px; }
.sc { color: #00f; } .dc { color: #f00; }
.act { width: 90px; height: 35px; padding: 13px 0 0 2px; background: repeating-linear-gradient(90deg, #e8e8e8 0 2px, transparent 2px 11px), repeating-linear-gradient(#e8e8e8 0 2px, #fff 2px 11px); }
.act i { display: block; width: 9px; height: 9px; }
.k4 { background: #000; } .k2 { background: #777; } .k1 { background: #bbb; }
footer { flex: none; height: 37px; background: #c8c8c8; display: flex; align-items: center; padding: 0 35px 2px 15px; font-size: 16.500px; color: #4b4f7d; }
.w { width: 86px; } .ad { width: 63px; } .br { width: 16px; } .lo { color: #a0a0a0; }
.utc { margin-left: auto; letter-spacing: .15px; } .utc b { color: #555; }

/* taskbar */
.taskbar { height: 72px; border-top: 2px solid #dedede; background: linear-gradient(90deg, #efefef 0, #f1f1f1 900px, #efefef 990px, #d6dfd6 1050px, #d3e0d4 1300px, #e2e7e1 1420px, #d4e0d5 1560px, #d5e0d7 1780px, #e5e9e4 1830px, #d6dddb 1900px, #d8e2d9 1960px, #efefef 2040px); display: flex; align-items: flex-start; font-family: "Noto Sans", sans-serif; color: #222; }
.widg { margin: 18px 0 0 24px; }
.start { margin: 18px 0 0 471px; }
.search { margin: 11px 0 0 20px; width: 328px; height: 47px; border-radius: 24px; background: #fbfbfb; border: 1.500px solid #dcdcdc; border-bottom: 2px solid #c4c4c4; display: flex; align-items: center; padding-left: 16px; font-size: 19.500px; color: #666; }
.search span { width: 190px; margin-left: 14px; letter-spacing: .2px; }
.apps { display: flex; margin-left: 4px; height: 66px; }
.apps div { width: 66px; padding: 17px 0 0 15px; position: relative; }
.apps div:nth-child(10) { padding-top: 11px; }
.run::after { content: ""; position: absolute; left: 28px; top: 59px; width: 9px; height: 5px; border-radius: 3px; background: #777b77; }
.apps .run.cur { width: 56px; margin: 7px 5px 0; height: 57px; padding: 10px 0 0 10px; border-radius: 6px; background: #eaefea; box-shadow: 0 1px 2px #b9c4ba; }
.run.cur::after { left: 16px; top: 52px; width: 24px; background: #0b79db; }
.tgb { font: 13px "Noto Sans", sans-serif; fill: #fff; }
.tchev { margin: 28px 0 0 133px; }
.lang { margin: 10px 0 0 24px; width: 62px; display: flex; flex-direction: column; font-size: 17px; line-height: 23px; }
.sys { margin: 20px 0 0 -1px; }
.clock { width: 107px; margin: 10px 0 0 -2px; display: flex; flex-direction: column; align-items: flex-end; font-size: 17px; line-height: 23px; letter-spacing: -.15px; }
.notif { margin: 22px 0 0 18px; width: 24px; height: 24px; border-radius: 50%; background: #0b79db; color: #fff; font-size: 15px; line-height: 23px; text-align: center; }
```
